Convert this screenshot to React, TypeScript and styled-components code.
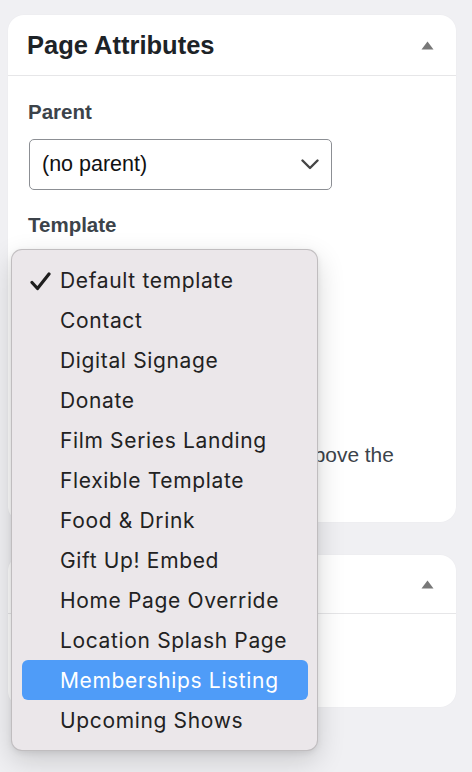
import React from "react";
import styled, { createGlobalStyle } from "styled-components";

const GlobalStyle = createGlobalStyle`
  html, body { margin: 0; padding: 0; background: #f0f0f3; }
  body { font-family: "Liberation Sans", Arial, sans-serif; }
  * { box-sizing: border-box; }
`;

const Page = styled.div`
  position: relative;
  width: 472px;
  height: 772px;
  overflow: hidden;
  padding: 15px 16px 0 8px;
  display: flex;
  flex-direction: column;
  gap: 33px;
`;

const Card = styled.section<{ $h: number }>`
  height: ${(p) => p.$h}px;
  background: #ffffff;
  border-radius: 16px;
  box-shadow: 0 0 2px rgba(0, 0, 0, 0.03);
  display: flex;
  flex-direction: column;
`;

const CardHeader = styled.header<{ $h: number }>`
  height: ${(p) => p.$h}px;
  flex-shrink: 0;
  display: flex;
  align-items: center;
  justify-content: space-between;
  padding: 0 22px 0 19px;
  border-bottom: 1px solid #e6e6e8;
`;

const Title = styled.h2`
  margin: 0;
  font-size: 25.5px;
  font-weight: 700;
  color: #1d2327;
`;

const Body = styled.div`
  padding: 0 18px 20px 20px;
  display: flex;
  flex-direction: column;
  align-items: flex-start;
`;

const Label = styled.div<{ $mt: number }>`
  margin-top: ${(p) => p.$mt}px;
  font-size: 20.5px;
  line-height: 24px;
  font-weight: 700;
  color: #3c434a;
`;

const Select = styled.div<{ $w: number }>`
  margin-top: 15px;
  margin-left: 1px;
  width: ${(p) => p.$w}px;
  height: 51px;
  border: 1px solid #8c8f94;
  border-radius: 5px;
  display: flex;
  align-items: center;
  justify-content: space-between;
  padding: 0 12px 0 12px;
  font-size: 21.5px;
  color: #111;
  background: #fff;
`;

const Help = styled.p`
  margin: 202px 0 0 0;
  font-size: 20.9px;
  line-height: 31.5px;
  color: #3c434a;
  width: 400px;
`;

const Menu = styled.ul`
  position: absolute;
  left: 11px;
  top: 249px;
  width: 307px;
  margin: 0;
  padding: 10px 0;
  list-style: none;
  background: #ebe7ea;
  border: 1px solid rgba(0, 0, 0, 0.18);
  border-radius: 11px;
  box-shadow: 0 10px 28px rgba(0, 0, 0, 0.16), 0 2px 6px rgba(0, 0, 0, 0.08);
  z-index: 10;
`;

const Item = styled.li<{ $active?: boolean }>`
  position: relative;
  margin: 0 9px 0 10px;
  height: 40px;
  padding: 1px 0 0 38px;
  border-radius: 6px;
  display: flex;
  align-items: center;
  font-family: Inter, "Noto Sans", sans-serif;
  font-size: 21px;
  letter-spacing: 0.65px;
  color: ${(p) => (p.$active ? "#ffffff" : "#222222")};
  background: ${(p) => (p.$active ? "#4f9cf8" : "transparent")};
`;

const Check = styled.svg`
  position: absolute;
  left: 8px;
  top: 12px;
`;

const Triangle = () => (
  <svg width="13" height="9" viewBox="0 0 13 9">
    <path d="M6.5 0.5 L12.5 8.5 L0.5 8.5 Z" fill="#787878" />
  </svg>
);

const Chevron = () => (
  <svg width="18" height="11" viewBox="0 0 18 11">
    <path d="M1.5 1.5 L9 9 L16.5 1.5" fill="none" stroke="#454545" strokeWidth="2.4" strokeLinecap="round" strokeLinejoin="round" />
  </svg>
);

const templates = [
  "Default template",
  "Contact",
  "Digital Signage",
  "Donate",
  "Film Series Landing",
  "Flexible Template",
  "Food & Drink",
  "Gift Up! Embed",
  "Home Page Override",
  "Location Splash Page",
  "Memberships Listing",
  "Upcoming Shows",
];

export default function App() {
  return (
    <>
      <GlobalStyle />
      <Page>
        <Card $h={507}>
          <CardHeader $h={61}>
            <Title>Page Attributes</Title>
            <Triangle />
          </CardHeader>
          <Body>
            <Label $mt={24}>Parent</Label>
            <Select $w={303}>
              <span>(no parent)</span>
              <Chevron />
            </Select>
            <Label $mt={23}>Template</Label>
            <Help>Need help? Use the Help tab above the screen title.</Help>
          </Body>
        </Card>
        <Card $h={152}>
          <CardHeader $h={59}>
            <span />
            <Triangle />
          </CardHeader>
        </Card>
        <Menu>
          {templates.map((t, i) => (
            <Item key={t} $active={t === "Memberships Listing"}>
              {i === 0 && (
                <Check width="21" height="19" viewBox="0 0 21 19">
                  <path d="M2 10.5 L7.5 16.5 L19 2" fill="none" stroke="#1e1e1e" strokeWidth="3.2" strokeLinecap="round" strokeLinejoin="round" />
                </Check>
              )}
              {t}
            </Item>
          ))}
        </Menu>
      </Page>
    </>
  );
}
